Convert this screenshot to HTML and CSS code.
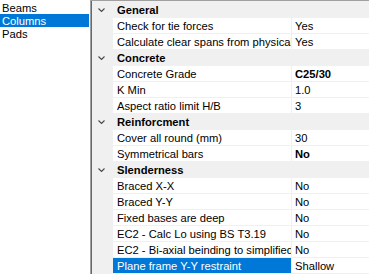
FILE: index.html
```html
<!DOCTYPE html>
<html lang="en">
<head>
  <meta charset="UTF-8">
  <title>Member Settings</title>
  <link rel="stylesheet" href="styles.css">
</head>
<body>
  <div class="window">
    <ul class="members">
      <li>Beams</li>
      <li class="selected">Columns</li>
      <li>Pads</li>
    </ul>

    <div class="grid">
      <div class="category">
        <span class="toggle"><svg width="7" height="4" viewBox="0 0 7 4"><polyline points="0.5,0.5 3.5,3.5 6.5,0.5" /></svg></span>
        <span class="cat-name">General</span>
      </div>
      <div class="prop"><span class="gutter"></span><span class="name">Check for tie forces</span><span class="value">Yes</span></div>
      <div class="prop"><span class="gutter"></span><span class="name">Calculate clear spans from physical beams</span><span class="value">Yes</span></div>

      <div class="category">
        <span class="toggle"><svg width="7" height="4" viewBox="0 0 7 4"><polyline points="0.5,0.5 3.5,3.5 6.5,0.5" /></svg></span>
        <span class="cat-name">Concrete</span>
      </div>
      <div class="prop"><span class="gutter"></span><span class="name">Concrete Grade</span><span class="value changed">C25/30</span></div>
      <div class="prop"><span class="gutter"></span><span class="name">K Min</span><span class="value">1.0</span></div>
      <div class="prop"><span class="gutter"></span><span class="name">Aspect ratio limit H/B</span><span class="value">3</span></div>

      <div class="category">
        <span class="toggle"><svg width="7" height="4" viewBox="0 0 7 4"><polyline points="0.5,0.5 3.5,3.5 6.5,0.5" /></svg></span>
        <span class="cat-name">Reinforcment</span>
      </div>
      <div class="prop"><span class="gutter"></span><span class="name">Cover all round (mm)</span><span class="value">30</span></div>
      <div class="prop"><span class="gutter"></span><span class="name">Symmetrical bars</span><span class="value changed">No</span></div>

      <div class="category">
        <span class="toggle"><svg width="7" height="4" viewBox="0 0 7 4"><polyline points="0.5,0.5 3.5,3.5 6.5,0.5" /></svg></span>
        <span class="cat-name">Slenderness</span>
      </div>
      <div class="prop"><span class="gutter"></span><span class="name">Braced X-X</span><span class="value">No</span></div>
      <div class="prop"><span class="gutter"></span><span class="name">Braced Y-Y</span><span class="value">No</span></div>
      <div class="prop"><span class="gutter"></span><span class="name">Fixed bases are deep</span><span class="value">No</span></div>
      <div class="prop"><span class="gutter"></span><span class="name">EC2 - Calc Lo using BS T3.19</span><span class="value">No</span></div>
      <div class="prop"><span class="gutter"></span><span class="name">EC2 - Bi-axial beinding to simplified EC2</span><span class="value">No</span></div>
      <div class="prop selected"><span class="gutter"></span><span class="name">Plane frame Y-Y restraint</span><span class="value">Shallow</span></div>
    </div>
  </div>
</body>
</html>
```

FILE: styles.css
```css
body {
  margin: 0;
  font-family: 'Liberation Sans', Arial, sans-serif;
  font-size: 11.2px;
  color: #000;
  background: #fff;
  overflow: hidden;
}

.window {
  display: flex;
  height: 274px;
}

/* member list on the left */
.members {
  list-style: none;
  margin: 0;
  padding: 1px 0 0 0;
  width: 89px;
  flex-shrink: 0;
}

.members li {
  height: 13px;
  line-height: 14px;
  padding-left: 2px;
  white-space: nowrap;
}

.members li.selected {
  background: #0078d7;
  color: #fff;
}

/* property grid */
.grid {
  flex: 1;
  margin-left: 1px;
  border-top: 1px solid #a0a0a0;
  border-left: 1px solid #a0a0a0;
  box-shadow: inset 1px 0 0 #696969;
  background: #f0f0f0;
  display: flex;
  flex-direction: column;
  gap: 1px;
  padding-top: 1px;
  min-width: 0;
}

.category {
  display: flex;
  align-items: center;
  height: 15px;
}

.toggle {
  width: 26px;
  display: flex;
  justify-content: flex-start;
  padding-left: 7px;
  box-sizing: border-box;
}

.toggle svg {
  display: block;
}

.toggle polyline {
  fill: none;
  stroke: #4a4a4a;
  stroke-width: 1.1;
}

.cat-name {
  font-weight: bold;
  line-height: 16px;
}

.prop {
  display: grid;
  grid-template-columns: 21px 178px 1fr;
  column-gap: 1px;
  height: 15px;
  line-height: 16px;
}

.prop .name,
.prop .value {
  background: #fff;
  white-space: nowrap;
  overflow: hidden;
}

.prop .name {
  padding-left: 4px;
}

.prop .value {
  padding-left: 3px;
}

.prop .value.changed {
  font-weight: bold;
}

.prop.selected .name {
  background: #0078d7;
  color: #fff;
}
```
